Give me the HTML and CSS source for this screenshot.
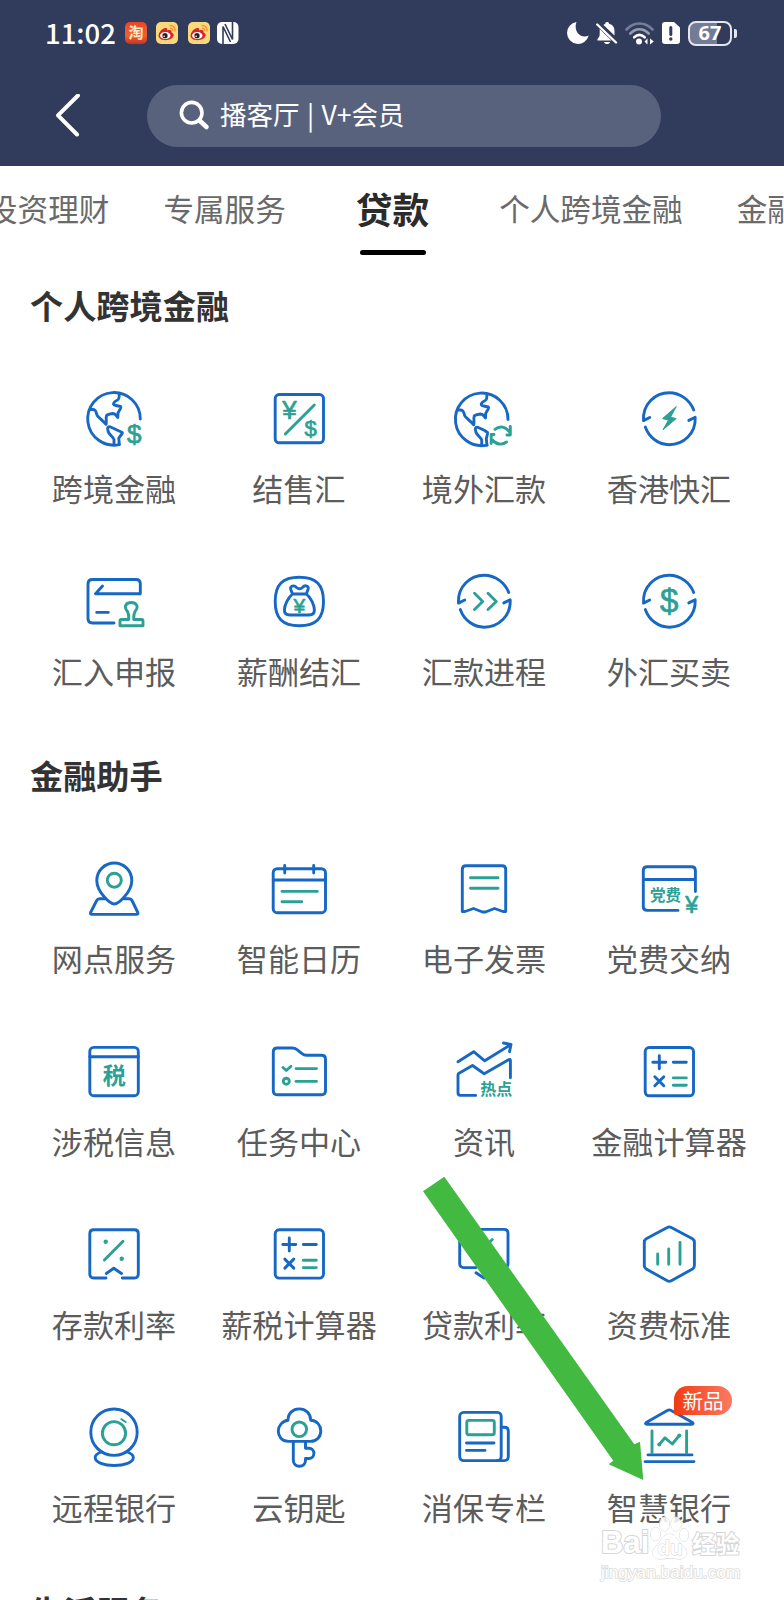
FILE: index.html
```html
<!DOCTYPE html>
<html lang="zh-CN">
<head>
  <meta charset="UTF-8">
  <title>全部服务</title>
  <link rel="stylesheet" href="styles.css">
</head>
<body>
  <!-- shared icon shapes -->
  <svg class="defs" width="0" height="0">
    <symbol id="globe" viewBox="0 0 64 64">
      <path d="M58.3 32A26.3 26.3 0 1 0 37.3 57.6M37 6.3C37.5 10 37.5 12 35.5 13C31 15 30 18 34 18.5L38.6 19.5C40 20.5 37 23.5 36 26L35.8 30.5C34 28.5 33.5 26.5 31 26.5C28 27 25.5 27 24.5 28.8C23.5 31 25 35 24 37.3C22 35 18 31.5 15.5 29C14 27 14.5 23.5 12.5 22.8L7.8 22.3"/>
      <path d="M32 57.6V52.5C31.5 50 26 47 26 43.5C25 41 26 39.3 28 39.8L35 43L40.3 45.5C41 47 37 49.5 36.8 51.5L37.3 57.6"/>
    </symbol>
    <symbol id="ring" viewBox="0 0 64 64">
      <path d="M12.7 30.5L6.5 33.6C5.5 17 18 5.7 32.3 5.7C43 5.7 53 13 56.7 23"/>
      <path d="M51.8 33.4L58.2 30.3C59 46.5 46.5 57.7 32.3 57.7C21.5 57.7 12 50.5 8.3 40"/>
    </symbol>
    <symbol id="calc" viewBox="0 0 64 64">
      <rect x="8.2" y="7.5" width="48.3" height="48.3" rx="4"/>
      <path d="M15.8 22.2h13M22.3 15.7v13M36.3 22.2h13M17.8 36.8l9 9M26.8 36.8l-9 9"/>
      <path class="g" d="M36.3 37.9h13M36.3 45.3h13"/>
    </symbol>
    <symbol id="weibo" viewBox="0 0 22 22">
      <rect width="22" height="22" rx="5" fill="#fbd978"/>
      <path d="M2.5 13.5C3 9.5 7 5.5 10 6c2 .3 1 2.500 1.500 2.500C14 7.500 16 8 15.500 10.500c3 1 2.800 4 0 6C11 19.500 2.500 18.500 2.500 13.500z" fill="#d8232a"/>
      <ellipse cx="9.300" cy="13.500" rx="5.200" ry="3.600" fill="#fff"/>
      <circle cx="9" cy="13.700" r="2.600" fill="#222"/>
      <circle cx="8.200" cy="14.200" r=".8" fill="#fff"/>
      <path d="M13.500 3.500c4-.5 6 2.500 5.500 6M14 6.200c1.800-.2 3 1 2.600 2.800" fill="none" stroke="#f0983a" stroke-width="1.400"/>
    </symbol>
  </svg>

  <div class="page">
    <header class="header">
      <div class="status">
        <span class="time">11:02</span>
        <span class="app-taobao">淘</span>
        <svg class="app" viewBox="0 0 22 22"><use href="#weibo"/></svg>
        <svg class="app" viewBox="0 0 22 22"><use href="#weibo"/></svg>
        <svg class="nfc" viewBox="0 0 22 22">
          <rect width="21.500" height="22" rx="5" fill="#fff"/>
          <path d="M6 22V4.500l7.500 15.500M15.500 0v17.500L8 2" fill="none" stroke="#313b5b" stroke-width="1.600"/>
        </svg>
        <div class="status-right">
          <svg width="22" height="22" viewBox="0 0 22 22"><path d="M9.500 0A11 11 0 1 0 21.700 13.500C14 17.500 6 9.500 9.500 0z" fill="#fff"/></svg>
          <svg class="bell" width="22" height="22" viewBox="0 0 22 22">
            <path d="M11 0c1.500 0 2 .8 2 1.800 4 1 5.500 4 5.500 7.200v4.500L7.500 3C8 2.500 8.500 2 9.300 1.800 9.200.8 9.800 0 11 0zM3.700 7L15.500 18.500H1.500v-1.500c1.500-1.500 2.200-3 2.200-5zM8 20h6c-.5 1.500-1.500 2-3 2s-2.500-.5-3-2z" fill="#fff"/>
            <path d="M1.200 2.500L20 20.500" stroke="#fff" stroke-width="2.400" stroke-linecap="round"/>
          </svg>
          <svg class="wifi" width="30" height="23" viewBox="0 0 30 23" fill="none" stroke-width="2.600" stroke-linecap="round">
            <path d="M1.500 7.500C9-.5 20-.5 27.500 7.500" stroke="#747d9a"/>
            <path d="M5.300 11.500C11 6 18 6 23.700 11.500" stroke="#969db2"/>
            <path d="M9.200 15.300c3.500-3.200 7-3.200 10.500 0" stroke="#fff"/>
            <circle cx="14" cy="19.500" r="3" fill="#fff"/>
            <path d="M22.500 16.500v6l-3-3zM25 16.500v6l3.800-3z" fill="#fff"/>
          </svg>
          <svg class="sim" width="18" height="22" viewBox="0 0 18 22">
            <path d="M3 0h9l6 5.500V19q0 3-3 3H3q-3 0-3-3V3q0-3 3-3z" fill="#fff"/>
            <path d="M8.800 5.500v7" stroke="#313b5b" stroke-width="3" stroke-linecap="round"/>
            <circle cx="8.800" cy="17" r="1.700" fill="#313b5b"/>
          </svg>
          <span class="battery">67</span>
          <i class="nub"></i>
        </div>
      </div>
      <div class="nav">
        <svg class="back" width="26" height="44" viewBox="0 0 26 44"><path d="M23 1.500L3 21.300L22 40.500"/></svg>
        <div class="search">
          <svg width="32" height="32" viewBox="0 0 32 32"><circle cx="12.700" cy="12.700" r="10.300"/><path d="M20.500 20.500L27.500 27" stroke-width="4.600"/></svg>
          <span>播客厅 | V+会员</span>
        </div>
      </div>
    </header>

    <nav class="tabs">
      <span>投资理财</span>
      <span>专属服务</span>
      <span class="active">贷款</span>
      <span>个人跨境金融</span>
      <span>金融助手</span>
    </nav>

    <section class="section">
      <h2>个人跨境金融</h2>
      <div class="grid">
        <div class="item">
          <svg class="icon" viewBox="0 0 64 64"><use href="#globe"/><text class="cur" x="52.300" y="55.700" font-size="26">$</text></svg>
          <p>跨境金融</p>
        </div>
        <div class="item">
          <svg class="icon" viewBox="0 0 64 64">
            <rect x="8.200" y="7.500" width="48.300" height="48.300" rx="4"/>
            <path class="g" d="M47.300 18L18.300 47"/>
            <text class="cur" x="22.500" y="32.300" font-size="26">¥</text>
            <text class="cur" x="43.700" y="48.700" font-size="22">$</text>
          </svg>
          <p>结售汇</p>
        </div>
        <div class="item">
          <svg class="icon" viewBox="0 0 64 64">
            <path d="M56 32.500A26.300 26.300 0 1 0 35 58.100M34.700 6.800C35.200 10.500 35.200 12.500 33.200 13.500C28.700 15.500 27.700 18.500 31.700 19L36.300 20C37.700 21 34.700 24 33.700 26.500L33.500 31C31.700 29 31.200 27 28.700 27C25.700 27.500 23.200 27.500 22.200 29.300C21.200 31.500 22.700 35.500 21.700 37.800C19.700 35.500 15.700 32 13.200 29.500C11.700 27.500 12.200 24 10.200 23.300L5.500 22.800"/>
            <path d="M29.700 58.100V53C29.200 50.500 23.700 47.500 23.700 44C22.700 41.500 23.700 39.800 25.700 40.300L32.700 43.500L35.500 45.500C36 47 34.500 49.500 34.300 52L35 58.100"/>
            <path class="g" d="M43 42.300C47.500 38.500 53.500 39.500 57 44.500M58.300 39.500V48H55M54.500 55C50 58.500 44 57.500 40.500 53M39.200 56.500V47.500H42"/>
          </svg>
          <p>境外汇款</p>
        </div>
        <div class="item">
          <svg class="icon" viewBox="0 0 64 64">
            <use href="#ring"/>
            <path class="bolt" d="M39 19.800L25.500 31.600L31.500 33L26 42.800L39.200 31.600L33.800 30.300z"/>
          </svg>
          <p>香港快汇</p>
        </div>
        <div class="item">
          <svg class="icon" viewBox="0 0 64 64">
            <path d="M32 53H10.500Q6 53 6 48.500V14Q6 9.500 10.500 9.500H54Q58.300 9.500 58.300 14V23.700H13.500L20.500 16M14.700 42.400H26.300"/>
            <path class="g" d="M46.800 49.500C47 46 46.800 44 45.500 41.500C41 36 44.500 32.500 49.200 32.500S57.500 36 53 41.500C51.700 44 51.500 46 51.700 49.500H59.500Q61 49.500 61 51V55.700H38V51Q38 49.500 39.500 49.500z"/>
          </svg>
          <p>汇入申报</p>
        </div>
        <div class="item">
          <svg class="icon" viewBox="0 0 64 64">
            <path d="M32.300 7.200C49 7.200 56.500 14.500 56.500 31.500S49 55.800 32.300 55.800S8.200 48.500 8.200 31.500S15.500 7.200 32.300 7.200z"/>
            <path d="M25.500 24H39.300C44 28 47.400 35 47.400 40Q47.400 45 42 45H23Q17.400 45 17.400 40C17.400 35 21 28 25.500 24zL23.800 19.500C22.500 16 27 14.500 29.500 17.500Q32.500 20 35.500 17.500C38 14.500 42.500 16 41 19.500L39.300 24"/>
            <text class="cur" x="32.300" y="42.800" font-size="21">¥</text>
          </svg>
          <p>薪酬结汇</p>
        </div>
        <div class="item">
          <svg class="icon" viewBox="0 0 64 64"><use href="#ring" y="-.5"/><path class="g" d="M22.500 23.300L30.700 31.500L22.500 39.500M36 23.300L44.300 31.500L36 39.500"/></svg>
          <p>汇款进程</p>
        </div>
        <div class="item">
          <svg class="icon" viewBox="0 0 64 64"><use href="#ring" y="-.5"/><text class="cur" x="32.300" y="42" font-size="33">$</text></svg>
          <p>外汇买卖</p>
        </div>
      </div>
    </section>

    <section class="section">
      <h2>金融助手</h2>
      <div class="grid">
        <div class="item">
          <svg class="icon" viewBox="0 0 64 64">
            <path d="M32.300 47C28 47 14.800 35 14.800 23.500A17.500 17.500 0 0 1 49.800 23.500C49.800 35 36.500 47 32.300 47z"/>
            <path d="M23 41.800H17.500Q15.500 41.800 14.700 43.500L8.600 55.500Q8 57.400 10 57.400H54.500Q56.500 57.400 55.800 55.500L50 43.500Q49.200 41.800 47.200 41.800H41.500"/>
            <circle class="g" cx="32.300" cy="23.200" r="7"/>
          </svg>
          <p>网点服务</p>
        </div>
        <div class="item">
          <svg class="icon" viewBox="0 0 64 64">
            <rect x="6.200" y="11.700" width="52.300" height="44" rx="4"/>
            <path d="M6.200 23H58.500M17.700 8.500V16M46.700 8.500V16"/>
            <path class="g" d="M15 34.400H50.300M15 44.700H34.700"/>
          </svg>
          <p>智能日历</p>
        </div>
        <div class="item">
          <svg class="icon" viewBox="0 0 64 64">
            <path d="M10.300 12.500Q10.300 8.700 14 8.700H50Q53.700 8.700 53.700 12.500V54.500H51L42.500 51.500L33.500 55H30.500L21.500 51.500L13 54.500H10.300z"/>
            <path class="g" d="M18.500 20.700H46M18.500 31.300H46"/>
          </svg>
          <p>电子发票</p>
        </div>
        <div class="item">
          <svg class="icon" viewBox="0 0 64 64">
            <path d="M58.400 34.500V13.500Q58.400 9.700 54.500 9.700H10.200Q6.300 9.700 6.300 13.500V49.500Q6.300 53.400 10.200 53.400H41M6.300 22.500H58.400"/>
            <text class="t" x="28.400" y="43.500" font-size="15.500">党费</text>
            <text class="cur" x="54.700" y="55.500" font-size="23">¥</text>
          </svg>
          <p>党费交纳</p>
        </div>
        <div class="item">
          <svg class="icon" viewBox="0 0 64 64">
            <rect x="7.800" y="7.400" width="48.500" height="48.300" rx="4"/>
            <path d="M7.800 16.800H56.300"/>
            <text class="t" x="32.300" y="44" font-size="23">税</text>
          </svg>
          <p>涉税信息</p>
        </div>
        <div class="item">
          <svg class="icon" viewBox="0 0 64 64">
            <path d="M6.300 12Q6.300 8 10.300 8H25Q28 8 30 9.700L35 13.700Q37 15.300 39.500 15.300H54.500Q58.500 15.300 58.500 19.300V50.800Q58.500 54.800 54.500 54.800H10.300Q6.300 54.800 6.300 50.800z"/>
            <path class="g" d="M16 27.500L19.300 30.500L24 26.200M29 28.600H49.500M29 41.400H49.500"/>
            <circle class="g" cx="19.300" cy="41.200" r="3"/>
          </svg>
          <p>任务中心</p>
        </div>
        <div class="item">
          <svg class="icon" viewBox="0 0 64 64">
            <path d="M6 21.800L21.700 11.700L32.700 20.800L59 4.500M51.500 3L59 4.500L57.500 11.700"/>
            <path d="M23.700 55.400H8.500Q6 55.400 6 52.800V35Q6 33.900 7 33.200L20.500 25.500L32.200 33.700L57 19.500Q58.400 19 58.400 20.500V37.700"/>
            <text class="t" x="44.300" y="54.700" font-size="16">热点</text>
          </svg>
          <p>资讯</p>
        </div>
        <div class="item">
          <svg class="icon" viewBox="0 0 64 64"><use href="#calc"/></svg>
          <p>金融计算器</p>
        </div>
        <div class="item">
          <svg class="icon" viewBox="0 0 64 64">
            <path d="M24 55H11.800Q7.800 55 7.800 51V10.700Q7.800 6.700 11.800 6.700H52.300Q56.300 6.700 56.300 10.700V51Q56.300 55 52.300 55H40.300M24.300 50.500L31.800 45.300L39.500 50.500"/>
            <path class="g" d="M41 18.300L22.400 37"/>
            <circle class="dot" cx="23.700" cy="18.700" r="2.200"/><circle class="dot" cx="39.700" cy="35.700" r="2.200"/>
          </svg>
          <p>存款利率</p>
        </div>
        <div class="item">
          <svg class="icon" viewBox="0 0 64 64"><use href="#calc" y="-.7"/></svg>
          <p>薪税计算器</p>
        </div>
        <div class="item">
          <svg class="icon" viewBox="0 0 64 64">
            <path d="M24 44.600H11.700Q7.700 44.600 7.700 40.600V10.400Q7.700 6.400 11.700 6.400H52Q56 6.400 56 10.400V40.600Q56 44.600 52 44.600H40M24 49.800L32 55L40 49.800"/>
            <path class="g" d="M40.300 16.500L24 33"/>
            <circle class="dot" cx="24.500" cy="18" r="2.200"/><circle class="dot" cx="39" cy="32" r="2.200"/>
          </svg>
          <p>贷款利率</p>
        </div>
        <div class="item">
          <svg class="icon" viewBox="0 0 64 64">
            <path d="M30.300 4.500Q32.300 3.300 34.300 4.500L55.500 15.800Q57.400 17 57.400 19.500V42.500Q57.400 44.800 55.500 46L34.300 57.800Q32.300 58.900 30.300 57.800L9.200 46Q7.300 44.800 7.300 42.500V19.500Q7.300 17 9.200 15.800z"/>
            <path class="g" d="M20.700 31V41.300M31.700 26V41.300M43 19.500V41.300"/>
          </svg>
          <p>资费标准</p>
        </div>
        <div class="item">
          <svg class="icon" viewBox="0 0 64 64">
            <circle cx="32" cy="26.200" r="23.200"/>
            <path d="M19 46C15 47.500 13.200 49.500 13.200 51.500C13.200 56.500 22 59.500 32.200 59.500S51.300 56.500 51.300 51.500C51.300 49.500 49.500 47.500 45.500 46"/>
            <circle class="g" cx="32" cy="27.200" r="11.600"/>
            <path class="g glint" d="M39.300 13.200L43.700 16"/>
          </svg>
          <p>远程银行</p>
        </div>
        <div class="item">
          <svg class="icon" viewBox="0 0 64 64">
            <path d="M21.500 35.400C14.500 35.400 11.300 30 11.300 25S15.500 14.500 21 14.200C21 7 26 2.900 32.300 2.900S43.500 7 43.700 14.200C50 14.500 53.800 19.500 53.800 25S50 35.400 43.500 35.400z"/>
            <path d="M26.300 35.400V54.300C26.300 58 29 60.200 32.500 60.200S38.500 58 38.500 54.300V52.500H42C44.500 52.500 46.900 50.500 46.900 47.300S44.500 42.200 42 42.200H38.500V35.400"/>
            <circle class="g" cx="32.300" cy="23.300" r="7.300"/>
          </svg>
          <p>云钥匙</p>
        </div>
        <div class="item">
          <svg class="icon" viewBox="0 0 64 64">
            <rect x="7.700" y="6.400" width="41.500" height="48.200" rx="4"/>
            <path d="M49.200 21.200H52.400Q56.300 21.200 56.300 25V50.600Q56.300 54.600 52.400 54.600H45M14.500 37H42M14.500 44.400H33"/>
            <rect class="g" x="14.800" y="14.400" width="27.500" height="14.300" rx="2"/>
          </svg>
          <p>消保专栏</p>
        </div>
        <div class="item">
          <svg class="icon" viewBox="0 0 64 64">
            <path d="M30.300 4.500Q32.300 3.200 34.300 4.500L55.500 16.500Q57 18 55 18.200H10Q7.500 18 9.200 16.500zM11 48.900H55M8 55.600H57"/>
            <path class="g" d="M15 25V47M49.600 25V47M22.300 38.400L28 31.800L35.300 38L42.300 29.500"/>
            <circle class="dot" cx="22.300" cy="38.400" r="2"/><circle class="dot" cx="42.300" cy="29.500" r="2"/>
          </svg>
          <span class="badge">新品</span>
          <p>智慧银行</p>
        </div>
      </div>
    </section>

    <section class="section">
      <h2>生活服务</h2>
    </section>

    <!-- pointer to 智慧银行 -->
    <svg class="arrow" width="222" height="306" viewBox="0 0 222 306"><path d="M1 17.300L22.300 2.700L212.300 270.300L218 267.700L221.300 306L186.700 290.300L191.300 286.700z"/></svg>

    <div class="watermark">
      <div class="wm-logo">
        <span>Bai</span>
        <svg width="39" height="44" viewBox="0 0 39 44">
          <ellipse cx="5.500" cy="18" rx="5" ry="6.500"/><ellipse cx="14.500" cy="8" rx="5" ry="7"/><ellipse cx="26" cy="8" rx="5" ry="7"/><ellipse cx="34" cy="19" rx="4.500" ry="6.500"/>
          <path d="M19.500 18C26 18 27 25 33 30C41 38 34 44 28 43Q20 41 12 43C4 44-1 37 6 30C12 25 13 18 19.500 18z"/>
          <text x="20" y="39">du</text>
        </svg>
        <span class="wm-cn">经验</span>
      </div>
      <div class="wm-url">jingyan.baidu.com</div>
    </div>
  </div>
</body>
</html>
```

FILE: styles.css
```css
* {
  box-sizing: border-box;
}

body {
  margin: 0;
  background: #fff;
  font-family: "Noto Sans CJK SC", sans-serif;
}

svg {
  display: block;
  flex: none;
}

.defs {
  position: absolute;
}

.page {
  position: relative;
  width: 784px;
  height: 1600px;
  overflow: hidden;
}

/* header */
.header {
  height: 166px;
  background: #313b5b;
  color: #fff;
}

.status {
  display: flex;
  align-items: center;
  height: 66px;
  padding: 0 47px 0 45px;
}

.time {
  width: 80px;
  font-size: 27.5px;
  font-weight: 500;
  line-height: 64px;
  height: 66px;
}

.app-taobao {
  width: 22px;
  height: 22px;
  border-radius: 5px;
  background: linear-gradient(#e8452a, #f0622e 60%, #c93420);
  color: #ffe9c9;
  font-size: 15px;
  font-weight: 700;
  line-height: 19px;
  text-align: center;
}

.app {
  width: 22px;
  height: 22px;
  margin-left: 9.3px;
}

.nfc {
  width: 22px;
  height: 22px;
  margin-left: 7px;
}

.status-right {
  display: flex;
  align-items: center;
  margin-left: auto;
}

.bell {
  margin-left: 7px;
}

.wifi {
  margin-left: 7px;
}

.sim {
  margin-left: 7px;
}

.battery {
  width: 44px;
  height: 25px;
  margin-left: 8px;
  border: 2px solid #e4e6ed;
  border-radius: 8px;
  background: linear-gradient(90deg, #747b94 67%, #313b5b 67%);
  font-family: "Open Sans", sans-serif;
  font-size: 20px;
  font-weight: 700;
  line-height: 20px;
  text-align: center;
}

.nub {
  width: 3px;
  height: 9px;
  margin-left: 2px;
  border-radius: 0 2px 2px 0;
  background: #e4e6ed;
}

.nav {
  display: flex;
  align-items: center;
  padding: 19px 0 0 55px;
}

.back {
  fill: none;
  stroke: #fff;
  stroke-width: 4;
  stroke-linecap: round;
  stroke-linejoin: round;
}

.search {
  display: flex;
  align-items: center;
  width: 514px;
  height: 62px;
  margin-left: 66px;
  padding-left: 32px;
  border-radius: 31px;
  background: #59627d;
  font-size: 26.5px;
  word-spacing: 1.5px;
}

.search svg {
  fill: none;
  stroke: #fff;
  stroke-width: 3.6;
  stroke-linecap: round;
}

.search span {
  margin-left: 9px;
  line-height: 58px;
  height: 62px;
}

/* tabs */
.tabs {
  display: flex;
  gap: 54px;
  height: 117px;
  margin-left: -13px;
  overflow: hidden;
  color: #6a6a6a;
  font-size: 30.6px;
  line-height: 84px;
  white-space: nowrap;
}

.tabs .active {
  position: relative;
  margin: 0 16px;
  color: #2b2b2b;
  font-size: 36.7px;
  font-weight: 700;
}

.tabs .active::after {
  content: "";
  position: absolute;
  left: 4px;
  top: 84px;
  width: 66px;
  height: 5px;
  border-radius: 3px;
  background: #000;
}

/* sections */
.section {
  padding: 2px 0 2px 21.5px;
}

.section h2 {
  margin: 0 0 62px 8.5px;
  color: #333;
  font-size: 33.2px;
  font-weight: 700;
  line-height: 40px;
}

.section + .section {
  padding-top: 0;
}

.grid {
  display: grid;
  grid-template-columns: repeat(4, 185px);
  grid-auto-rows: 183px;
}

.item {
  position: relative;
  display: flex;
  flex-direction: column;
  align-items: center;
}

.item p {
  margin: 17px 0 0;
  color: #5c5c5c;
  font-size: 31.1px;
  line-height: 40px;
  white-space: nowrap;
}

.icon {
  width: 64px;
  height: 64px;
  overflow: visible;
  fill: none;
  stroke: #1767c4;
  stroke-width: 2.9;
  stroke-linecap: round;
  stroke-linejoin: round;
}

.g {
  stroke: #2ba195;
}

.glint {
  stroke-width: 2;
}

.dot {
  fill: #2ba195;
  stroke: none;
}

.bolt {
  fill: #2ba195;
  stroke: #2ba195;
  stroke-width: 1;
}

.t {
  fill: #2ba195;
  stroke: none;
  font-weight: 700;
  text-anchor: middle;
}

/* currency signs inside icons */
.cur {
  fill: #2ba195;
  stroke: #2ba195;
  stroke-width: 0.7;
  font-family: "Liberation Sans", sans-serif;
  text-anchor: middle;
}

.badge {
  position: absolute;
  left: 97.5px;
  top: -20px;
  width: 58px;
  height: 29px;
  border-radius: 14px 15px 15px 2px;
  background: linear-gradient(90deg, #f23a12, #fc7a62);
  color: #fff;
  font-size: 20.5px;
  line-height: 28px;
  text-align: center;
}

.arrow {
  position: absolute;
  left: 422px;
  top: 1174px;
  fill: #42b941;
}

/* watermark */
.watermark {
  position: absolute;
  left: 601px;
  top: 1516px;
  width: 144px;
  color: #fff;
  opacity: 0.85;
  -webkit-text-stroke: 2px #cfcfcf;
  paint-order: stroke fill;
}

.wm-logo {
  display: flex;
  align-items: flex-end;
  height: 44px;
  font-family: "Liberation Sans", sans-serif;
  font-size: 31px;
  font-weight: 700;
  line-height: 34px;
}

.wm-logo svg {
  overflow: visible;
  margin-left: 1px;
  fill: #fff;
  stroke: #cfcfcf;
  stroke-width: 1;
}

.wm-logo text {
  font-size: 21px;
  text-anchor: middle;
}

.wm-logo .wm-cn {
  margin-left: 3px;
  font-family: "Noto Sans CJK SC", sans-serif;
  font-size: 23.5px;
  line-height: 34px;
}

.wm-url {
  font-family: "Liberation Sans", sans-serif;
  font-size: 17.3px;
  line-height: 24px;
  -webkit-text-stroke: 1.6px #d6d6d6;
}
```
